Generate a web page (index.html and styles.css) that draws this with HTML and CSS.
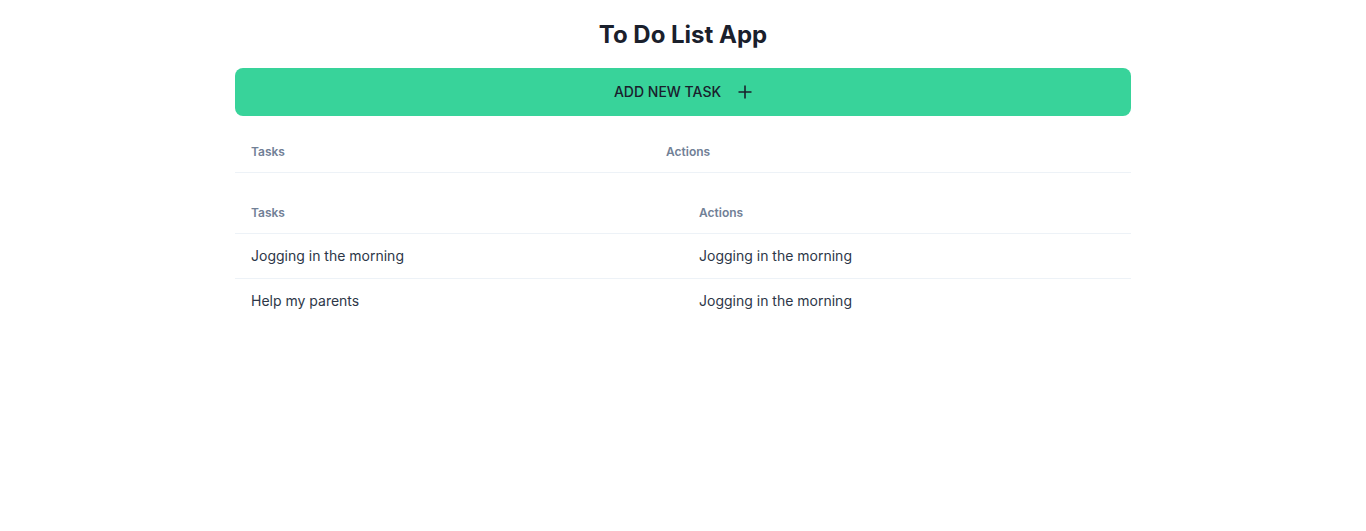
FILE: index.html
```html
<!DOCTYPE html>
<html lang="en">
<head>
<meta charset="utf-8">
<title>To Do List App</title>
<link rel="stylesheet" href="styles.css">
</head>
<body>
<main class="container">
  <h1 class="title">To Do List App</h1>
  <button class="add-btn" type="button">
    <span>ADD NEW TASK</span>
    <svg class="plus" width="14" height="14" viewBox="0 0 14 14" aria-hidden="true"><path d="M7 0.5v13M0.5 7h13" stroke="currentColor" stroke-width="1.6" fill="none"/></svg>
  </button>
  <table class="tbl tbl-first">
    <thead>
      <tr><th class="col1">Tasks</th><th>Actions</th></tr>
    </thead>
    <tbody></tbody>
  </table>
  <table class="tbl tbl-second">
    <thead>
      <tr><th class="col1">Tasks</th><th>Actions</th></tr>
    </thead>
    <tbody>
      <tr><td>Jogging in the morning</td><td>Jogging in the morning</td></tr>
      <tr><td>Help my parents</td><td>Jogging in the morning</td></tr>
    </tbody>
  </table>
</main>
</body>
</html>
```
FILE: styles.css
```css
* { box-sizing: border-box; }
html, body { margin: 0; padding: 0; background: #ffffff; }
body {
  font-family: Inter, "Noto Sans", "Liberation Sans", sans-serif;
  color: #1a202c;
}
.container {
  width: 896px;
  margin: 0 auto;
  padding-top: 17px;
  display: flex;
  flex-direction: column;
}
.title {
  margin: 0;
  text-align: center;
  font-size: 24px;
  line-height: 36px;
  font-weight: 700;
  color: #1a202c;
}
.add-btn {
  margin-top: 15px;
  height: 48px;
  border: none;
  border-radius: 8px;
  background: #38d39a;
  color: #1a202c;
  font-family: inherit;
  font-size: 14px;
  font-weight: 500;
  display: flex;
  align-items: center;
  justify-content: center;
  gap: 17px;
  padding: 0 0 1px 0;
  cursor: pointer;
}
.plus { display: block; color: #1a202c; }
.tbl {
  width: 100%;
  border-collapse: collapse;
  table-layout: fixed;
}
.tbl-first { margin-top: 16px; }
.tbl-second { margin-top: 20px; }
.tbl-first .col1 { width: 415px; }
.tbl-second .col1 { width: 448px; }
.tbl th {
  text-align: left;
  font-size: 12px;
  line-height: 16px;
  font-weight: 600;
  color: #718096;
  padding: 12px 16px;
  border-bottom: 1px solid #edf2f7;
}
.tbl td {
  font-size: 14px;
  line-height: 20px;
  color: #2d3748;
  padding: 12px 16px;
  border-bottom: 1px solid #edf2f7;
}
.tbl tbody tr:last-child td { border-bottom: none; }
```
